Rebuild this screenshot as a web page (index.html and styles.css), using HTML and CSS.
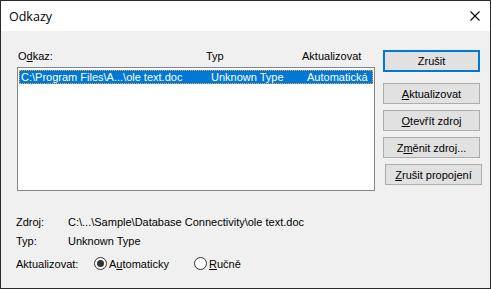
FILE: index.html
```html
<!DOCTYPE html>
<html lang="cs">
<head>
    <meta charset="UTF-8">
    <title>Odkazy</title>
    <link rel="stylesheet" href="styles.css">
</head>
<body>
    <div class="window">
        <div class="titlebar">
            <span class="title">Odkazy</span>
            <svg class="close" width="10" height="10" viewBox="0 0 10 10">
                <path d="M0.5 0.5 L9.5 9.5 M9.5 0.5 L0.5 9.5" stroke="#000" stroke-width="1.1" fill="none"/>
            </svg>
        </div>

        <div class="content">
            <div class="top">
                <div class="links">
                    <div class="cols header">
                        <span>O<u>d</u>kaz:</span>
                        <span>Typ</span>
                        <span>Aktualizovat</span>
                    </div>
                    <div class="listbox">
                        <div class="cols row selected">
                            <span>C:\Program Files\A...\ole text.doc</span>
                            <span>Unknown Type</span>
                            <span>Automatická</span>
                        </div>
                    </div>
                </div>

                <div class="buttons">
                    <button class="btn default">Zrušit</button>
                    <button class="btn spaced"><u>A</u>ktualizovat</button>
                    <button class="btn"><u>O</u>tevřít zdroj</button>
                    <button class="btn">Z<u>m</u>ěnit zdroj...</button>
                    <button class="btn shifted"><u>Z</u>rušit propojení</button>
                </div>
            </div>

            <div class="info">
                <div class="info-row">
                    <span class="label">Zdroj:</span>
                    <span>C:\...\Sample\Database Connectivity\ole text.doc</span>
                </div>
                <div class="info-row">
                    <span class="label">Typ:</span>
                    <span>Unknown Type</span>
                </div>
                <div class="info-row update">
                    <span class="label wide">Aktualizovat:</span>
                    <label class="radio"><span class="dot checked"></span>A<u>u</u>tomaticky</label>
                    <label class="radio"><span class="dot"></span><u>R</u>učně</label>
                </div>
            </div>
        </div>
    </div>
</body>
</html>
```

FILE: styles.css
```css
/* Classic dialog look */
body {
    margin: 0;
    font-family: "Liberation Sans", Arial, sans-serif;
    font-size: 11px;
    color: #000;
}

.window {
    width: 491px;
    height: 289px;
    box-sizing: border-box;
    border: 1px solid #2b2b2b;
    background-color: #f0f0f0;
}

.titlebar {
    height: 30px;
    background-color: #fff;
    display: flex;
    align-items: center;
    justify-content: space-between;
    padding: 0 10px 0 8px;
}

.title {
    font-family: "Open Sans", "Noto Sans", sans-serif;
    font-size: 12.5px;
    margin-top: 1px;
}

.close {
    display: block;
}

.content {
    padding: 0 0 0 14px;
}

.top {
    display: flex;
}

/* List of links */
.links {
    width: 358px;
    margin-left: 2px;
    padding-top: 19px;
}

.cols {
    display: grid;
    grid-template-columns: 188px 96px 1fr;
}

.header {
    height: 17px;
    padding-left: 1px;
}

.listbox {
    height: 118px;
    background-color: #fff;
    border: 1px solid #828790;
    padding: 2px 1px;
}

.row {
    height: 14px;
    line-height: 14px;
    padding-left: 2px;
}

.row span:nth-child(2) {
    padding-left: 2px;
}

.row span:nth-child(3) {
    padding-left: 2px;
}

.selected {
    background-color: #0078d7;
    color: #fff;
    outline: 1px dotted #f7a531;
    outline-offset: -1px;
}

/* Button column */
.buttons {
    display: flex;
    flex-direction: column;
    gap: 6px;
    margin-left: 8px;
    padding-top: 19px;
}

.btn {
    width: 97px;
    height: 21px;
    padding: 0;
    font-family: inherit;
    font-size: 11px;
    color: #000;
    background-color: #e1e1e1;
    border: 1px solid #adadad;
}

.btn.default {
    height: 22px;
    border: 2px solid #0078d7;
}

.btn.spaced {
    margin-top: 5px;
}

.btn.shifted {
    margin-left: 2px;
}

/* Source details */
.info {
    padding-top: 21px;
    padding-left: 1px;
}

.info-row {
    display: flex;
    align-items: center;
    height: 19px;
}

.label {
    width: 52px;
}

.label.wide {
    width: 78px;
}

.update {
    margin-top: 4px;
}

.radio {
    display: flex;
    align-items: center;
    margin-right: 25px;
}

.dot {
    width: 11px;
    height: 11px;
    border: 1px solid #333;
    border-radius: 50%;
    background-color: #fff;
    margin-right: 2px;
    position: relative;
}

.dot.checked::after {
    content: "";
    position: absolute;
    left: 2px;
    top: 2px;
    width: 7px;
    height: 7px;
    border-radius: 50%;
    background-color: #333;
}
```
